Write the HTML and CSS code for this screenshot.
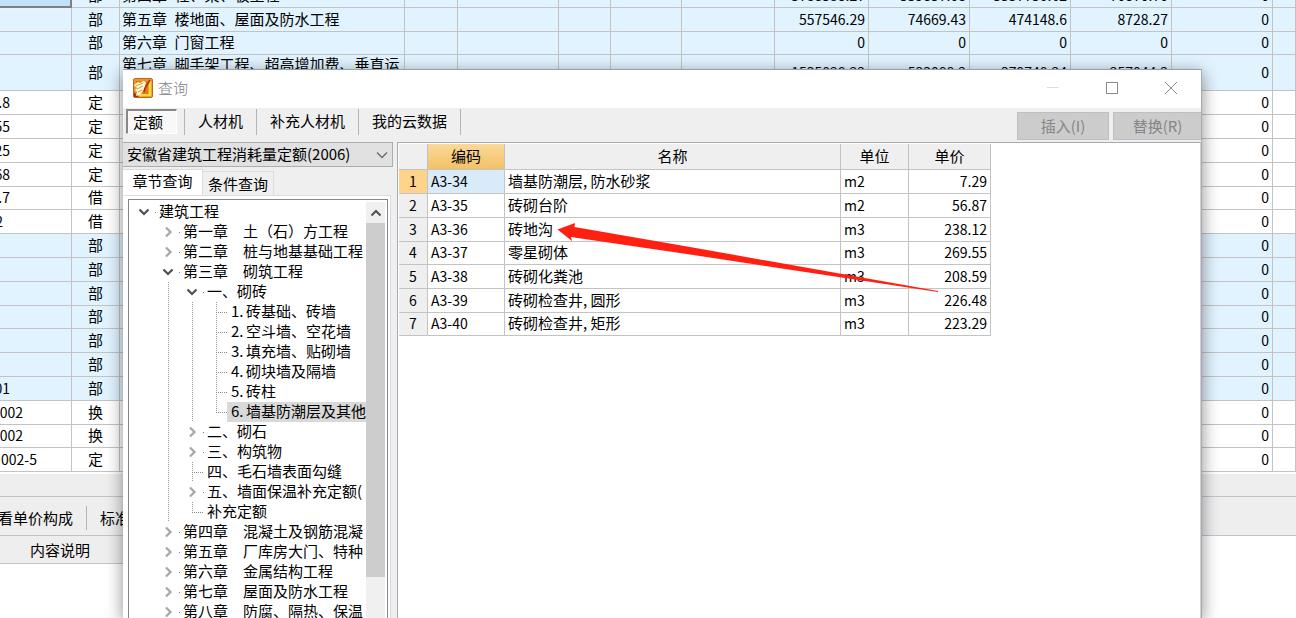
FILE: index.html
```html
<!DOCTYPE html>
<html lang="zh-CN">
<head>
<meta charset="utf-8">
<title>查询</title>
<link rel="stylesheet" href="styles.css">
</head>
<body>
<svg class="defs" aria-hidden="true">
  <symbol id="open" viewBox="0 0 12 12"><path d="M1.500 3.500 6 8l4.500-4.500" fill="none" stroke="#505050" stroke-width="2.200"/></symbol>
  <symbol id="closed" viewBox="0 0 12 12"><path d="M4 1.500 8.500 6 4 10.500" fill="none" stroke="#a6a6a6" stroke-width="2.200"/></symbol>
</svg>
<div class="app">
  <div class="budget-wrap">
    <table class="grid budget">
      <colgroup>
        <col class="w-code"><col class="w-kind"><col class="w-title"><col class="w-a"><col class="w-b"><col class="w-c"><col class="w-d"><col class="w-e"><col class="w-f"><col class="w-g"><col class="w-g"><col class="w-g"><col class="w-g"><col>
      </colgroup>
      <tbody>
        <tr class="part"><td class="picked"></td><td class="kind">部</td><td>第四章&ensp;柱、梁、板工程</td><td></td><td></td><td></td><td></td><td></td><td class="num">5788538.27</td><td class="num">559857.08</td><td class="num">5557750.62</td><td class="num">70870.70</td><td class="num">0</td><td></td></tr>
        <tr class="part"><td></td><td class="kind">部</td><td>第五章&ensp;楼地面、屋面及防水工程</td><td></td><td></td><td></td><td></td><td></td><td class="num">557546.29</td><td class="num">74669.43</td><td class="num">474148.6</td><td class="num">8728.27</td><td class="num">0</td><td></td></tr>
        <tr class="part"><td></td><td class="kind">部</td><td>第六章&ensp;门窗工程</td><td></td><td></td><td></td><td></td><td></td><td class="num">0</td><td class="num">0</td><td class="num">0</td><td class="num">0</td><td class="num">0</td><td></td></tr>
        <tr class="part tall"><td></td><td class="kind">部</td><td>第七章&ensp;脚手架工程、超高增加费、垂直运</td><td></td><td></td><td></td><td></td><td></td><td class="num">1535028.22</td><td class="num">533088.2</td><td class="num">379740.24</td><td class="num">257044.2</td><td class="num">0</td><td></td></tr>
        <tr><td><span class="code">.8</span></td><td class="kind">定</td><td colspan="10"></td><td class="num">0</td><td></td></tr>
        <tr><td><span class="code">55</span></td><td class="kind">定</td><td colspan="10"></td><td class="num">0</td><td></td></tr>
        <tr><td><span class="code">25</span></td><td class="kind">定</td><td colspan="10"></td><td class="num">0</td><td></td></tr>
        <tr><td><span class="code">68</span></td><td class="kind">定</td><td colspan="10"></td><td class="num">0</td><td></td></tr>
        <tr><td><span class="code">.7</span></td><td class="kind">借</td><td colspan="10"></td><td class="num">0</td><td></td></tr>
        <tr><td><span class="code tiny">2</span></td><td class="kind">借</td><td colspan="10"></td><td class="num">0</td><td></td></tr>
        <tr class="part"><td></td><td class="kind">部</td><td colspan="10"></td><td class="num">0</td><td></td></tr>
        <tr class="part"><td></td><td class="kind">部</td><td colspan="10"></td><td class="num">0</td><td></td></tr>
        <tr class="part"><td></td><td class="kind">部</td><td colspan="10"></td><td class="num">0</td><td></td></tr>
        <tr class="part"><td></td><td class="kind">部</td><td colspan="10"></td><td class="num">0</td><td></td></tr>
        <tr class="part"><td></td><td class="kind">部</td><td colspan="10"></td><td class="num">0</td><td></td></tr>
        <tr class="part"><td></td><td class="kind">部</td><td colspan="10"></td><td class="num">0</td><td></td></tr>
        <tr class="part"><td><span class="code">01</span></td><td class="kind">部</td><td colspan="10"></td><td class="num">0</td><td></td></tr>
        <tr><td><span class="code mid">002</span></td><td class="kind">换</td><td colspan="10"></td><td class="num">0</td><td></td></tr>
        <tr><td><span class="code mid">002</span></td><td class="kind">换</td><td colspan="10"></td><td class="num">0</td><td></td></tr>
        <tr><td><span class="code wide">002-5</span></td><td class="kind">定</td><td colspan="10"></td><td class="num">0</td><td></td></tr>
      </tbody>
    </table>
  </div>
  <div class="scroll-strip"></div>
  <div class="detail-tabs"><button>看单价构成</button><button>标准换算</button></div>
  <div class="detail-head">内容说明</div>
</div>

<section class="dialog" role="dialog" aria-labelledby="dlg-title">
  <header class="titlebar">
    <svg class="logo" viewBox="0 0 20 20" aria-hidden="true">
      <rect x=".5" y=".5" width="19" height="19" rx="1.500" fill="#f3a51c" stroke="#b9691a"/>
      <path d="M1 1h18v2H3v13l-2 2z" fill="#e8952a"/>
      <path d="M1 14 6 19H1z" fill="#b32a10"/>
      <path d="M3 3h12v13H3z" fill="#e07a14"/>
      <path d="M16 3h2v15H5l2-2h9z" fill="#f9d648"/>
      <path d="m1 7 4-3 2 1 3-2 3 1-1 5-2 4-2 3-5 2 1-4-2-2 2-2z" fill="#fff6d2"/>
      <path d="m3 8 7-3M4 11l6-3M5 14l4-2" stroke="#d99a3c" fill="none"/>
      <path d="m17 2-5 8-1 4" stroke="#a82c10" stroke-width="1.500" fill="none"/>
    </svg>
    <h1 id="dlg-title">查询</h1>
    <div class="win-buttons">
      <button aria-label="最小化" disabled><svg viewBox="0 0 12 12"><path d="M0 5.500h12" stroke="#dedede"/></svg></button>
      <button aria-label="最大化"><svg viewBox="0 0 12 12"><path d="M.5.5h11v11H.5z" fill="none" stroke="#8a8a8a"/></svg></button>
      <button aria-label="关闭"><svg viewBox="0 0 12 12"><path d="m0 0 12 12M12 0 0 12" stroke="#8a8a8a"/></svg></button>
    </div>
  </header>
  <div class="toolbar">
    <nav class="modes">
      <button class="current">定额</button>
      <button>人材机</button>
      <button>补充人材机</button>
      <button>我的云数据</button>
    </nav>
    <div class="actions"><button disabled>插入(I)</button><button disabled>替换(R)</button></div>
  </div>
  <div class="content">
    <aside class="side">
      <div class="library">
        <select aria-label="定额库"><option>安徽省建筑工程消耗量定额(2006)</option></select>
        <svg viewBox="0 0 12 8" aria-hidden="true"><path d="m1 1.500 5 5 5-5" fill="none" stroke="#6a6a6a" stroke-width="1.300"/></svg>
      </div>
      <div class="side-tabs"><button class="current">章节查询</button><button>条件查询</button></div>
      <div class="side-panel">
        <div class="tree-box">
          <ul class="tree">
            <li><button><svg><use href="#open"/></svg></button><span>建筑工程</span></li>
            <li><i></i><button><svg><use href="#closed"/></svg></button><span>第一章　土（石）方工程</span></li>
            <li><i></i><button><svg><use href="#closed"/></svg></button><span>第二章　桩与地基基础工程</span></li>
            <li><i></i><button><svg><use href="#open"/></svg></button><span>第三章　砌筑工程</span></li>
            <li><i></i><i class="line"></i><button><svg><use href="#open"/></svg></button><span>一、砌砖</span></li>
            <li><i></i><i class="line"></i><i class="line"></i><i class="line tick"></i><span><b>1.</b>砖基础、砖墙</span></li>
            <li><i></i><i class="line"></i><i class="line"></i><i class="line tick"></i><span><b>2.</b>空斗墙、空花墙</span></li>
            <li><i></i><i class="line"></i><i class="line"></i><i class="line tick"></i><span><b>3.</b>填充墙、贴砌墙</span></li>
            <li><i></i><i class="line"></i><i class="line"></i><i class="line tick"></i><span><b>4.</b>砌块墙及隔墙</span></li>
            <li><i></i><i class="line"></i><i class="line"></i><i class="line tick"></i><span><b>5.</b>砖柱</span></li>
            <li><i></i><i class="line"></i><i class="line"></i><i class="line tick last"></i><span class="selected"><b>6.</b>墙基防潮层及其他</span></li>
            <li><i></i><i class="line"></i><button><svg><use href="#closed"/></svg></button><span>二、砌石</span></li>
            <li><i></i><i class="line"></i><button><svg><use href="#closed"/></svg></button><span>三、构筑物</span></li>
            <li><i></i><i class="line"></i><i class="line tick"></i><span>四、毛石墙表面勾缝</span></li>
            <li><i></i><i class="line"></i><button><svg><use href="#closed"/></svg></button><span>五、墙面保温补充定额(</span></li>
            <li><i></i><i class="line"></i><i class="line tick last"></i><span>补充定额</span></li>
            <li><i></i><button><svg><use href="#closed"/></svg></button><span>第四章　混凝土及钢筋混凝</span></li>
            <li><i></i><button><svg><use href="#closed"/></svg></button><span>第五章　厂库房大门、特种</span></li>
            <li><i></i><button><svg><use href="#closed"/></svg></button><span>第六章　金属结构工程</span></li>
            <li><i></i><button><svg><use href="#closed"/></svg></button><span>第七章　屋面及防水工程</span></li>
            <li><i></i><button><svg><use href="#closed"/></svg></button><span>第八章　防腐、隔热、保温</span></li>
          </ul>
          <div class="scrollbar">
            <svg viewBox="0 0 12 12" aria-hidden="true"><path d="m1.500 8.500 4.500-4.500 4.500 4.500" fill="none" stroke="#555" stroke-width="2.200"/></svg>
            <div class="thumb"></div>
          </div>
        </div>
      </div>
    </aside>
    <main class="results">
      <table class="grid quota">
        <colgroup><col class="q-no"><col class="q-code"><col class="q-name"><col class="q-unit"><col class="q-price"></colgroup>
        <thead><tr><th></th><th class="sorted">编码</th><th>名称</th><th>单位</th><th>单价</th></tr></thead>
        <tbody>
          <tr class="active"><th>1</th><td>A3-34</td><td class="name">墙基防潮层, 防水砂浆</td><td>m2</td><td class="num">7.29</td></tr>
          <tr><th>2</th><td>A3-35</td><td class="name">砖砌台阶</td><td>m2</td><td class="num">56.87</td></tr>
          <tr><th>3</th><td>A3-36</td><td class="name">砖地沟</td><td>m3</td><td class="num">238.12</td></tr>
          <tr><th>4</th><td>A3-37</td><td class="name">零星砌体</td><td>m3</td><td class="num">269.55</td></tr>
          <tr><th>5</th><td>A3-38</td><td class="name">砖砌化粪池</td><td>m3</td><td class="num">208.59</td></tr>
          <tr><th>6</th><td>A3-39</td><td class="name">砖砌检查井, 圆形</td><td>m3</td><td class="num">226.48</td></tr>
          <tr><th>7</th><td>A3-40</td><td class="name">砖砌检查井, 矩形</td><td>m3</td><td class="num">223.29</td></tr>
        </tbody>
      </table>
      <svg class="arrow" viewBox="557 220 382 74" aria-hidden="true"><path d="M557.500 229.500 575 223l-.5 4L690 247l248 44v1L690 254.500 571 237l1 4z" fill="#ff2012"/></svg>
    </main>
  </div>
</section>
</body>
</html>
```

FILE: styles.css
```css
* { box-sizing: border-box; }

body {
  margin: 0;
  height: 100vh;
  overflow: hidden;
  position: relative;
  background: #fff;
  color: #000;
  font: 15px/20px "Noto Sans CJK SC", sans-serif;
}

button, select { font: inherit; color: inherit; margin: 0; padding: 0; border: 0; background: none; }
.defs { display: none; }

/* shared grid look */
.grid { border-collapse: separate; border-spacing: 0; table-layout: fixed; }
.grid td, .grid th {
  padding: 0 3px 2px;
  border-right: 1px solid #c3c3c3;
  border-bottom: 1px solid #c3c3c3;
  font-size: 14px;
  font-weight: 400;
  text-align: left;
  line-height: 18px;
  white-space: nowrap;
  overflow: hidden;
}
.grid .num { text-align: right; }

/* budget table behind the dialog */
.app { display: flex; flex-direction: column; height: 100%; }
.budget-wrap { overflow: hidden; flex: none; }
.budget { width: 100%; margin-top: -16px; }
.budget tr { height: 24px; }
.budget tr:nth-child(5n+4) { height: 23px; }
.budget tr:nth-child(3) { height: 23px; }
.budget tr.tall { height: 36px; }
.budget .part td { background: #e1f3ff; }
.budget td.kind { text-align: center; font-size: 15px; }
.budget td:nth-child(3) { font-size: 15px; padding: 0 2px 2px; }
.budget .tall td:nth-child(3) { vertical-align: top; }
.budget td.picked { background: #c2e1fa; border-right: 2px solid #808080; border-bottom: 2px solid #808080; }
.w-code { width: 72px; }
.w-kind { width: 48px; }
.w-title { width: 285px; }
.w-a { width: 53px; }
.w-b { width: 101px; }
.w-c { width: 52px; }
.w-d { width: 71px; }
.w-e { width: 93px; }
.w-f { width: 94px; }
.w-g { width: 101px; }
.code { display: flex; justify-content: flex-end; width: 10px; margin-left: -3px; overflow: hidden; }
.code.tiny { width: 3px; }
.code.mid { width: 23px; }
.code.wide { width: 37px; }

.scroll-strip { height: 22px; flex: none; margin-top: 2px; background: #eee; }
.detail-tabs {
  display: flex;
  flex: none;
  align-items: center;
  height: 40px;
  padding: 4px 0 0;
  background: #eee;
  border-top: 1px solid #c3c3cb;
  border-bottom: 1px solid #c3c3cb;
}
.detail-tabs button { height: 24px; padding-right: 13px; margin-left: -2px; border-right: 1px solid #b4b4b4; }
.detail-tabs button + button { margin-left: 13px; }
.detail-head { width: 360px; height: 28px; padding: 4px 30px; background: #eee; border-bottom: 1px solid #c3c3c3; }

/* dialog window */
.dialog {
  position: absolute;
  top: 69px;
  right: 94px;
  bottom: 0;
  left: 123px;
  display: flex;
  flex-direction: column;
  overflow: hidden;
  background: #efefef;
  border-top: 1px solid #93a1a8;
  border-right: 1px solid #a9a9b0;
  box-shadow: 0 4px 16px rgba(0, 0, 0, .45);
}
.titlebar { display: flex; align-items: center; flex: none; height: 38px; padding: 0 10px 2px; background: #fff; }
.logo { width: 20px; height: 20px; }
.titlebar h1 { margin: 0 0 0 5px; font-size: 15px; font-weight: 300; color: #808080; }
.win-buttons { display: flex; gap: 47px; margin-left: auto; padding-right: 14px; }
.win-buttons button { width: 12px; height: 12px; display: flex; }
.win-buttons svg { width: 12px; height: 12px; }

.toolbar { display: flex; justify-content: space-between; flex: none; height: 34px; }
.modes { display: flex; align-items: flex-start; padding: 1px 0 0 3px; }
.modes button { height: 26px; padding: 0 13px 2px; border-right: 1px solid #b4b4b4; }
.modes button.current {
  height: 25px;
  width: 51px;
  margin-right: 7px;
  padding: 0 5px;
  text-align: left;
  background: #f8f8f8;
  border: 1px solid #fff;
  border-top: 2px solid #888;
  border-left: 2px solid #888;
}
.modes button.current + button { border-left: 1px solid #b4b4b4; }
.actions { display: flex; gap: 4px; padding: 4px 0 2px; }
.actions button { width: 92px; background: #ccc; border: 1px solid #bfbfbf; color: #858585; }
.actions button + button { width: 88px; border-right: 0; }

.content { display: flex; flex: 1; min-height: 0; }
.side { display: flex; flex-direction: column; width: 274px; padding-right: 4px; }
.library { display: grid; align-items: center; flex: none; }
.library > * { grid-area: 1 / 1; }
.library select { appearance: none; width: 100%; height: 25px; padding: 0 4px 2px; background: #e1e1e1; border: 1px solid #adadad; border-left: 0; border-radius: 0; }
.library svg { width: 12px; height: 8px; justify-self: end; margin-right: 5px; pointer-events: none; }
.side-tabs { display: flex; align-items: flex-end; flex: none; height: 28px; }
.side-tabs button { height: 24px; padding: 0 5px; border: 1px solid #dcdcdc; border-left: 0; border-bottom: 0; }
.side-tabs .current { height: 26px; width: 80px; padding: 0 9px 3px; background: #fff; }
.side-panel { display: flex; flex: 1; min-height: 0; padding: 3px 2px 0 5px; margin-right: 2px; background: #fff; border-top: 1px solid #dcdcdc; border-right: 1px solid #dcdcdc; }
.tree-box { display: flex; flex: 1; min-width: 0; padding: 2px 2px 0 3px; border: 1px solid #828790; border-bottom: 0; }
.tree { flex: 1; min-width: 0; margin: 0; padding: 0; list-style: none; overflow: hidden; }
.tree li { display: flex; height: 20px; line-height: 18px; white-space: nowrap; }
.tree li > i, .tree li > button { flex: none; width: 24px; height: 20px; position: relative; }
.tree button { display: grid; place-items: center; }
.tree button svg { width: 12px; height: 12px; }
.tree button::after { content: ""; position: absolute; right: 0; top: 10px; width: 1px; height: 1px; background: #777; }
.tree .line { background: repeating-linear-gradient(#999 0 1px, transparent 1px 2px) 12px 0 / 1px 100% no-repeat; }
.tree .last { background-size: 1px 10px; }
.tree .tick::after { content: ""; position: absolute; left: 12px; right: 1px; top: 10px; border-top: 1px dotted #888; }
.tree span { padding-left: 3px; }
.tree .selected { background: #d9d9d9; flex: 1; margin-left: -1px; padding-left: 4px; }
.tree b { display: inline-block; width: 15px; font-weight: 400; }
.scrollbar { display: flex; flex-direction: column; align-items: center; flex: none; width: 19px; background: #f0f0f0; }
.scrollbar svg { flex: none; width: 12px; height: 12px; margin: 5px 0 4px; }
.thumb { width: 100%; height: 85%; background: #cdcdcd; }

.results { position: relative; flex: 1; background: #fff; border: 1px solid #a9a9b3; border-bottom: 0; border-right-color: #d0d0d8; padding: 1px; }
.quota { width: 592px; }
.quota tr { height: 24px; }
.quota thead tr { height: 26px; }
.quota tbody tr:nth-child(3n+4) { height: 23px; }
.quota th { background: #efefef; text-align: center; }
.quota thead th { font-size: 15px; }
.quota .name { font-size: 15px; }
.quota th.sorted { background: linear-gradient(#fbd99a, #f2c266); }
.quota .active th { background: #ffd38a; }
.quota .active td:nth-child(2) { background: #d9eaf9; }
.q-no { width: 29px; }
.q-code { width: 77px; }
.q-name { width: 336px; }
.q-unit { width: 68px; }
.q-price { width: 82px; }
.arrow { position: absolute; left: 159px; top: 77px; width: 382px; height: 74px; pointer-events: none; }
```
